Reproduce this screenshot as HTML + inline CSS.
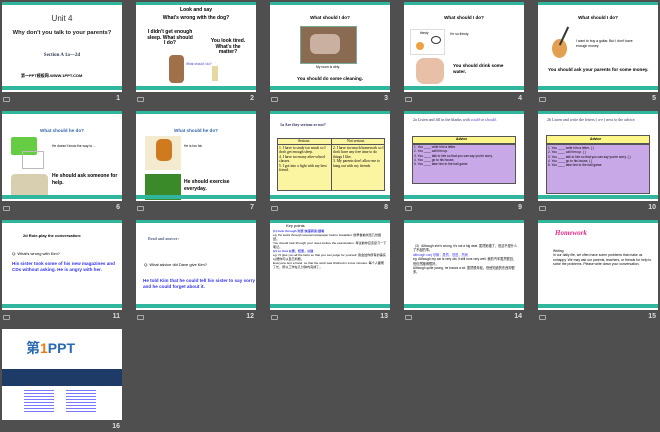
<!DOCTYPE html>
<html><head><meta charset="utf-8"><style>
*{margin:0;padding:0;box-sizing:border-box}
body{width:660px;height:432px;background:#4f4f4f;position:relative;overflow:hidden;font-family:"Liberation Sans","Noto Sans CJK SC",sans-serif}
.s{position:absolute;width:120px;height:90px;background:#fff;overflow:hidden}
.t:before,.t:after{content:"";position:absolute;left:0;right:0;height:3px;background:#2fb69c}
.t:before{top:0}.t:after{bottom:2px;height:4px}
.n{position:absolute;color:#ddd;font-size:7px;font-weight:bold;text-align:right;width:30px}
.ic{position:absolute;width:7px;height:5px;border:1px solid #aaa;border-radius:1px}
.a{position:absolute;font-size:4.6px;line-height:5.5px;color:#000}
.b{font-weight:bold}
.c{text-align:center;left:0;right:0}
.img{position:absolute}
</style></head><body>

<!-- Row 1 -->
<div class="s t" style="left:2px;top:2px">
 <div class="a c" style="top:12px;font-size:8px;line-height:9px;color:#333">Unit 4</div>
 <div class="a c b" style="top:28px;font-size:5.8px;line-height:6px;color:#222">Why don't you talk to your parents?</div>
 <div class="a c b" style="top:51px;font-size:5px;color:#345;font-family:'Liberation Serif',serif">Section A 1a—2d</div>
 <div class="a" style="top:71px;left:19px;font-size:4px;font-weight:bold">第一PPT模板网-WWW.1PPT.COM</div>
</div>
<div class="s t" style="left:136px;top:2px">
 <div class="a c b" style="top:6px;font-size:5px">Look and say</div>
 <div class="a c b" style="top:14px;font-size:5px">What's wrong with the dog?</div>
 <div class="a b" style="top:28px;left:11px;width:46px;text-align:center;font-size:5px">I didn't get enough sleep. What should I do?</div>
 <div class="a b" style="top:37px;left:70px;width:44px;text-align:center;font-size:5px">You look tired. What's the matter?</div>
 <div class="img" style="left:33px;top:53px;width:15px;height:28px;background:#a0704a;border-radius:4px"></div>
 <div class="a" style="top:60px;left:50px;font-size:3.2px;color:#44c">What should I do?</div>
 <div class="img" style="left:76px;top:64px;width:6px;height:15px;background:#e6d7a3"></div>
</div>
<div class="s t" style="left:270px;top:2px">
 <div class="a c b" style="top:13px">What should I do?</div>
 <div class="img" style="left:30px;top:24px;width:57px;height:38px;background:#8a6a50;border:1px solid #7a9"></div>
 <div class="img" style="left:40px;top:32px;width:30px;height:20px;background:#c9b0a0;border-radius:6px"></div>
 <div class="a" style="top:63px;left:46px;font-size:3.3px">My room is dirty.</div>
 <div class="a c b" style="top:74px">You should do some cleaning.</div>
</div>
<div class="s t" style="left:404px;top:2px">
 <div class="a c b" style="top:13px">What should I do?</div>
 <div class="img" style="left:6px;top:27px;width:35px;height:26px;border:1px solid #ddd"></div>
 <div class="img" style="left:12px;top:40px;width:8px;height:8px;background:#f0a040;border-radius:50%"></div>
 <div class="img" style="left:27px;top:34px;width:10px;height:8px;border:1px solid #333;border-radius:50%"></div>
 <div class="a" style="top:29px;left:16px;font-size:3.2px">thirsty</div>
 <div class="a" style="top:30px;left:46px;font-size:3.3px">I'm so thirsty.</div>
 <div class="img" style="left:12px;top:56px;width:28px;height:26px;background:#e8c0a8;border-radius:8px"></div>
 <div class="a b" style="top:61px;left:49px;width:62px">You should drink some water.</div>
</div>
<div class="s t" style="left:538px;top:2px">
 <div class="a c b" style="top:13px">What should I do?</div>
 <div class="img" style="left:14px;top:37px;width:15px;height:19px;background:#e3a050;border-radius:50%"></div>
 <div class="img" style="left:25px;top:24px;width:2px;height:20px;background:#333;transform:rotate(25deg)"></div>
 <div class="a" style="top:37px;left:38px;font-size:3.4px;line-height:5px;width:62px">I want to buy a guitar. But I don't have enough money.</div>
 <div class="a b" style="top:65px;left:10px;width:108px">You should ask your parents for some money.</div>
</div>

<!-- Row 2 -->
<div class="s t" style="left:2px;top:111px">
 <div class="a c b" style="top:17px;color:#36a">What should he do?</div>
 <div class="img" style="left:9px;top:26px;width:26px;height:18px;background:#6c4;border-radius:2px"></div>
 <div class="img" style="left:20px;top:40px;width:22px;height:18px;border:1px solid #bbb"></div>
 <div class="a" style="top:33px;left:50px;font-size:3.3px;width:50px">He doesn't know the way to ...</div>
 <div class="img" style="left:9px;top:63px;width:37px;height:25px;background:#d8cfb0;border-radius:4px"></div>
 <div class="a b" style="top:62px;left:50px;width:66px;font-size:5px;line-height:6.5px">He should ask someone for help.</div>
</div>
<div class="s t" style="left:136px;top:111px">
 <div class="a c b" style="top:17px;color:#36a">What should he do?</div>
 <div class="img" style="left:9px;top:25px;width:36px;height:34px;background:#f4ead0"></div>
 <div class="img" style="left:20px;top:28px;width:16px;height:22px;background:#d07a20;border-radius:5px"></div>
 <div class="a" style="top:33px;left:48px;font-size:3.3px">He is too fat.</div>
 <div class="img" style="left:9px;top:63px;width:36px;height:26px;background:#3a8a2a"></div>
 <div class="a b" style="top:68px;left:48px;width:66px;font-size:5px;line-height:6.5px">He should exercise everyday.</div>
</div>
<div class="s t" style="left:270px;top:111px">
 <div class="a" style="top:11px;left:10px;font-size:4px;color:#336;font-family:'Liberation Serif',serif;font-weight:bold">1a Are they serious or not?</div>
 <div class="img" style="left:7px;top:27px;width:108px;height:53px;background:#fbf4a0;border:1px solid #555"></div>
 <div class="img" style="left:61px;top:27px;width:1px;height:53px;background:#555"></div>
 <div class="img" style="left:7px;top:33px;width:108px;height:1px;background:#555"></div>
 <div class="a" style="top:28px;left:28px;font-size:3.8px;font-family:'Liberation Serif',serif">Serious</div>
 <div class="a" style="top:28px;left:77px;font-size:3.8px;font-family:'Liberation Serif',serif">Not serious</div>
 <div class="a" style="top:35px;left:9px;width:52px;font-size:3.7px;line-height:4.4px;font-family:'Liberation Serif',serif">1. I have to study too much so I don't get enough sleep.<br>4. I have too many after-school classes.<br>5. I got into a fight with my best friend.</div>
 <div class="a" style="top:35px;left:63px;width:52px;font-size:3.7px;line-height:4.4px;font-family:'Liberation Serif',serif">2. I have too much homework so I don't have any free time to do things I like.<br>3. My parents don't allow me to hang out with my friends.</div>
</div>
<div class="s t" style="left:404px;top:111px">
 <div class="a" style="top:6px;left:9px;width:105px;font-size:4px;line-height:5.5px;color:#336;font-family:'Liberation Serif',serif">2a Listen and fill in the blanks with <i style="color:#63c">could</i> or <i style="color:#63c">should</i>.</div>
 <div class="img" style="left:8px;top:25px;width:104px;height:8px;background:#fdf78a;border:1px solid #555"></div>
 <div class="a b" style="top:26px;left:52px;font-size:3.4px">Advice</div>
 <div class="img" style="left:8px;top:33px;width:104px;height:40px;background:#c9a8e8;border:1px solid #555"></div>
 <div class="a" style="top:34px;left:10px;width:100px;font-size:3.2px;line-height:4.3px">1. You ____ write him a letter.<br>2. You ____ call him up.<br>3. You ____ talk to him so that you can say you're sorry.<br>4. You ____ go to his house.<br>5. You ____ take him to the ball game.</div>
</div>
<div class="s t" style="left:538px;top:111px">
 <div class="a" style="top:6px;left:9px;width:105px;font-size:4px;line-height:5.5px;color:#336;font-family:'Liberation Serif',serif">2b Listen and write the letters ( a-e ) next to the advice.</div>
 <div class="img" style="left:8px;top:24px;width:104px;height:9px;background:#fdf78a;border:1px solid #555"></div>
 <div class="a b" style="top:26px;left:52px;font-size:3.4px">Advice</div>
 <div class="img" style="left:8px;top:33px;width:104px;height:50px;background:#c9a8e8;border:1px solid #555"></div>
 <div class="a" style="top:35px;left:10px;width:100px;font-size:3.2px;line-height:4.3px">1. You ____ write him a letter. ( )<br>2. You ____ call him up. ( )<br>3. You ____ talk to him so that you can say you're sorry. ( )<br>4. You ____ go to his house. ( )<br>5. You ____ take him to the ball game.</div>
</div>

<!-- Row 3 -->
<div class="s t" style="left:2px;top:220px">
 <div class="a b" style="top:13px;left:21px;font-size:4px">2d Role-play the conversation:</div>
 <div class="a" style="top:31px;left:10px;font-size:4px">Q: What's wrong with Kim?</div>
 <div class="a b" style="top:41px;left:10px;width:108px;font-size:4.6px;color:#33e">His sister took some of his new magazines and CDs without asking. He is angry with her.</div>
</div>
<div class="s t" style="left:136px;top:220px">
 <div class="a b" style="top:16px;left:12px;font-size:4px;color:#568;font-family:'Liberation Serif',serif">Read and answer:</div>
 <div class="a" style="top:42px;left:8px;font-size:4px">Q: What advice did Dave give Kim?</div>
 <div class="a b" style="top:58px;left:7px;width:113px;font-size:4.6px;color:#33e">He told Kim that he could tell his sister to say sorry and he could forget about it.</div>
</div>
<div class="s t" style="left:270px;top:220px">
 <div class="a" style="top:3px;left:16px;font-size:4px">Key points</div>
 <div class="a" style="top:9px;left:3px;width:114px;font-size:3.1px;line-height:4px"><span style="color:#33e;font-weight:bold">(1) look through 浏览;快速阅读;细看</span><br>eg. He looks through several newspaper before breakfast. 他早餐前浏览几份报纸。<br>You should look through your notes before the examination. 考试前你应该复习一下笔记。<br><span style="color:#33e;font-weight:bold">(2) so that 以便，结果，以致</span><br>eg. I'll give you all the facts so that you can judge for yourself. 我会给你所有的事实以便你可以自己判断。<br>Everyone lent a hand, so that the work was finished in a few minutes. 每个人都帮了忙，所以工作在几分钟内完成了。</div>
</div>
<div class="s t" style="left:404px;top:220px">
 <div class="a" style="top:24px;left:9px;width:106px;font-size:3.2px;line-height:4.4px">（3）Although she's wrong, it's not a big deal. 虽然她错了，但这不是什么了不起的事。<br><span style="color:#33e">although conj 尽管，虽然，但是，然而</span><br>eg. Although my car is very old, it still runs very well. 我的汽车虽然很旧，但仍然跑得很好。<br>Although quite young, he knows a lot. 虽然很年轻，但他知道的东西却很多。</div>
</div>
<div class="s t" style="left:538px;top:220px">
 <div class="a b" style="top:9px;left:17px;font-size:7px;line-height:8px;color:#e0308a;font-style:italic;font-family:'Liberation Serif',serif">Homework</div>
 <div class="a" style="top:29px;left:15px;width:100px;font-size:3.4px;line-height:4.4px">Writing<br>In our daily life, we often have some problems that make us unhappy. We may ask our parents, teachers, or friends for help to solve the problems. Please write down your conversation.</div>
</div>

<!-- Row 4 -->
<div class="s" style="left:2px;top:329px;height:91px">
 <div class="a b" style="top:12px;left:24px;font-size:14px;line-height:15px;color:#2a6ab0">第<span style="color:#f07a10">1</span>PPT</div>
 <div class="img" style="left:0;top:40px;width:120px;height:17px;background:#1e3a66"></div>
 <div class="img" style="left:22px;top:61px;width:30px;height:24px;background:repeating-linear-gradient(#77f 0 1px,#fff 1px 3px)"></div>
 <div class="img" style="left:64px;top:61px;width:30px;height:24px;background:repeating-linear-gradient(#77f 0 1px,#fff 1px 3px)"></div>
</div>

<!-- labels -->
<div class="ic" style="left:3px;top:97px"></div><div class="n" style="left:90px;top:95px">1</div>
<div class="ic" style="left:137px;top:97px"></div><div class="n" style="left:224px;top:95px">2</div>
<div class="ic" style="left:271px;top:97px"></div><div class="n" style="left:358px;top:95px">3</div>
<div class="ic" style="left:405px;top:97px"></div><div class="n" style="left:492px;top:95px">4</div>
<div class="ic" style="left:539px;top:97px"></div><div class="n" style="left:626px;top:95px">5</div>
<div class="ic" style="left:3px;top:206px"></div><div class="n" style="left:90px;top:204px">6</div>
<div class="ic" style="left:137px;top:206px"></div><div class="n" style="left:224px;top:204px">7</div>
<div class="ic" style="left:271px;top:206px"></div><div class="n" style="left:358px;top:204px">8</div>
<div class="ic" style="left:405px;top:206px"></div><div class="n" style="left:492px;top:204px">9</div>
<div class="ic" style="left:539px;top:206px"></div><div class="n" style="left:626px;top:204px">10</div>
<div class="ic" style="left:3px;top:315px"></div><div class="n" style="left:90px;top:313px">11</div>
<div class="ic" style="left:137px;top:315px"></div><div class="n" style="left:224px;top:313px">12</div>
<div class="ic" style="left:271px;top:315px"></div><div class="n" style="left:358px;top:313px">13</div>
<div class="ic" style="left:405px;top:315px"></div><div class="n" style="left:492px;top:313px">14</div>
<div class="ic" style="left:539px;top:315px"></div><div class="n" style="left:626px;top:313px">15</div>
<div class="n" style="left:90px;top:423px">16</div>
</body></html>
